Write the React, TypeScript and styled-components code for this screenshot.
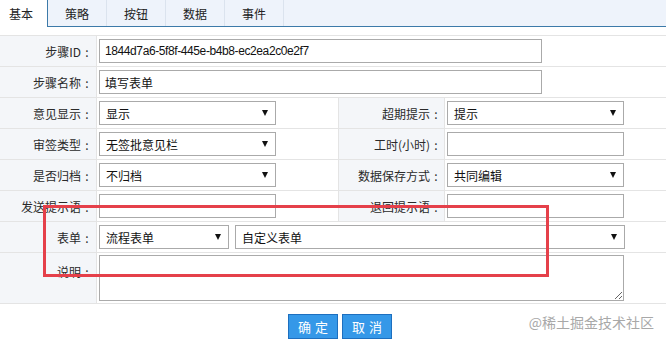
import styled, { createGlobalStyle } from "styled-components";

const GlobalStyle = createGlobalStyle`
  html, body {
    margin: 0;
    padding: 0;
    background: #fff;
  }
  body {
    font-family: "Liberation Sans", "Noto Sans CJK SC", sans-serif;
    font-size: 12px;
    color: #333;
  }
  * {
    box-sizing: border-box;
  }
`;

const Page = styled.div`
  position: relative;
  width: 666px;
  height: 342px;
  overflow: hidden;
`;

const TabBar = styled.div`
  display: flex;
  height: 27px;
  background: #eef3fb;
  border-bottom: 1px solid #3c7aa9;
`;

const Tab = styled.div<{ $active?: boolean; $first?: boolean }>`
  display: flex;
  align-items: center;
  height: ${(p) => (p.$active ? "27px" : "26px")};
  padding: ${(p) => (p.$first ? "0 14px 0 9px" : "0 17px")};
  border-right: 1px solid ${(p) => (p.$active ? "#3c7aa9" : "#dbe3ee")};
  background: ${(p) => (p.$active ? "#fff" : "transparent")};
  color: #222;
  font-size: 12px;
  font-family: "Noto Sans CJK SC", sans-serif;
`;

const FormGrid = styled.div`
  display: grid;
  grid-template-columns: 97px 241px 107px 1fr;
  margin-top: 8px;
  border-top: 1px solid #e4e4e4;
`;

const LabelCell = styled.div<{ $second?: boolean }>`
  display: flex;
  align-items: center;
  justify-content: flex-end;
  height: 31px;
  padding-right: ${(p) => (p.$second ? "2px" : "3px")};
  background: #f4f6f9;
  border-bottom: 1px solid #e4e4e4;
  border-right: 1px solid #e4e4e4;
  border-left: ${(p) => (p.$second ? "1px solid #e4e4e4" : "none")};
  color: #2a2a2a;
  font-family: "Noto Sans CJK SC", sans-serif;
  white-space: nowrap;
`;

const TallLabel = styled(LabelCell)`
  height: 51px;
  padding-bottom: 13px;
`;

const Colon = styled.span`
  display: inline-block;
  width: 12px;
  text-align: center;
`;

const ValueCell = styled.div<{ $span?: number }>`
  display: flex;
  align-items: center;
  gap: 6px;
  height: 31px;
  padding-left: 2px;
  grid-column: span ${(p) => p.$span ?? 1};
  border-bottom: 1px solid #e4e4e4;
`;

const TallValue = styled(ValueCell)`
  height: 51px;
  align-items: flex-start;
  padding-top: 2px;
`;

const TextBox = styled.div<{ $w: number; $tight?: boolean }>`
  display: flex;
  align-items: center;
  width: ${(p) => p.$w}px;
  height: 24px;
  padding-left: 5px;
  border: 1px solid #aaa;
  background: #fff;
  color: #111;
  font-size: 12px;
  letter-spacing: ${(p) => (p.$tight ? "-0.4px" : "0")};
  white-space: nowrap;
  overflow: hidden;
`;

const SelectBox = styled(TextBox)`
  position: relative;
  padding-left: 6px;
  font-family: "Noto Sans CJK SC", sans-serif;

  &::after {
    content: "";
    position: absolute;
    right: 7px;
    top: 8px;
    width: 0;
    height: 0;
    border-left: 3px solid transparent;
    border-right: 3px solid transparent;
    border-top: 6px solid #111;
  }
`;

const Memo = styled.textarea`
  width: 525px;
  height: 46px;
  margin: 0;
  border: 1px solid #aaa;
  background: #fff;
  resize: both;
  font-family: inherit;
`;

const Footer = styled.div`
  display: flex;
  justify-content: center;
  gap: 4px;
  padding-top: 10px;
  padding-left: 14px;
`;

const Button = styled.div`
  display: flex;
  align-items: center;
  justify-content: center;
  width: 50px;
  height: 25px;
  padding-left: 4px;
  background: #3598e8;
  border: 1px solid #1d6fbf;
  color: #fff;
  font-size: 13px;
  letter-spacing: 4px;
  font-family: "Noto Sans CJK SC", sans-serif;
`;

const Watermark = styled.div`
  position: absolute;
  right: 12px;
  top: 312px;
  color: #9a9a9a;
  font-size: 14px;
  font-family: "Noto Sans CJK SC", sans-serif;
  opacity: 0.85;
`;

const Highlight = styled.div`
  position: absolute;
  left: 43px;
  top: 205px;
  width: 506px;
  height: 72px;
  border: 3px solid #e5404a;
  pointer-events: none;
`;

const tabs = ["基本", "策略", "按钮", "数据", "事件"];

const Label = ({ text, second }: { text: string; second?: boolean }) => (
  <LabelCell $second={second}>
    {text}
    <Colon>:</Colon>
  </LabelCell>
);

export default function App() {
  return (
    <Page>
      <GlobalStyle />
      <TabBar>
        {tabs.map((t, i) => (
          <Tab key={t} $active={i === 0} $first={i === 0}>
            {t}
          </Tab>
        ))}
      </TabBar>

      <FormGrid>
        <Label text="步骤ID" />
        <ValueCell $span={3}>
          <TextBox $w={443} $tight>
            1844d7a6-5f8f-445e-b4b8-ec2ea2c0e2f7
          </TextBox>
        </ValueCell>

        <Label text="步骤名称" />
        <ValueCell $span={3}>
          <TextBox $w={443}>填写表单</TextBox>
        </ValueCell>

        <Label text="意见显示" />
        <ValueCell>
          <SelectBox $w={177}>显示</SelectBox>
        </ValueCell>
        <Label text="超期提示" second />
        <ValueCell>
          <SelectBox $w={177}>提示</SelectBox>
        </ValueCell>

        <Label text="审签类型" />
        <ValueCell>
          <SelectBox $w={177}>无签批意见栏</SelectBox>
        </ValueCell>
        <Label text="工时(小时)" second />
        <ValueCell>
          <TextBox $w={177} />
        </ValueCell>

        <Label text="是否归档" />
        <ValueCell>
          <SelectBox $w={177}>不归档</SelectBox>
        </ValueCell>
        <Label text="数据保存方式" second />
        <ValueCell>
          <SelectBox $w={177}>共同编辑</SelectBox>
        </ValueCell>

        <Label text="发送提示语" />
        <ValueCell>
          <TextBox $w={177} />
        </ValueCell>
        <Label text="退回提示语" second />
        <ValueCell>
          <TextBox $w={177} />
        </ValueCell>

        <Label text="表单" />
        <ValueCell $span={3}>
          <SelectBox $w={130}>流程表单</SelectBox>
          <SelectBox $w={390}>自定义表单</SelectBox>
        </ValueCell>

        <TallLabel>
          说明<Colon>:</Colon>
        </TallLabel>
        <TallValue $span={3}>
          <Memo />
        </TallValue>
      </FormGrid>

      <Footer>
        <Button>确定</Button>
        <Button>取消</Button>
      </Footer>

      <Highlight />
      <Watermark>@稀土掘金技术社区</Watermark>
    </Page>
  );
}
